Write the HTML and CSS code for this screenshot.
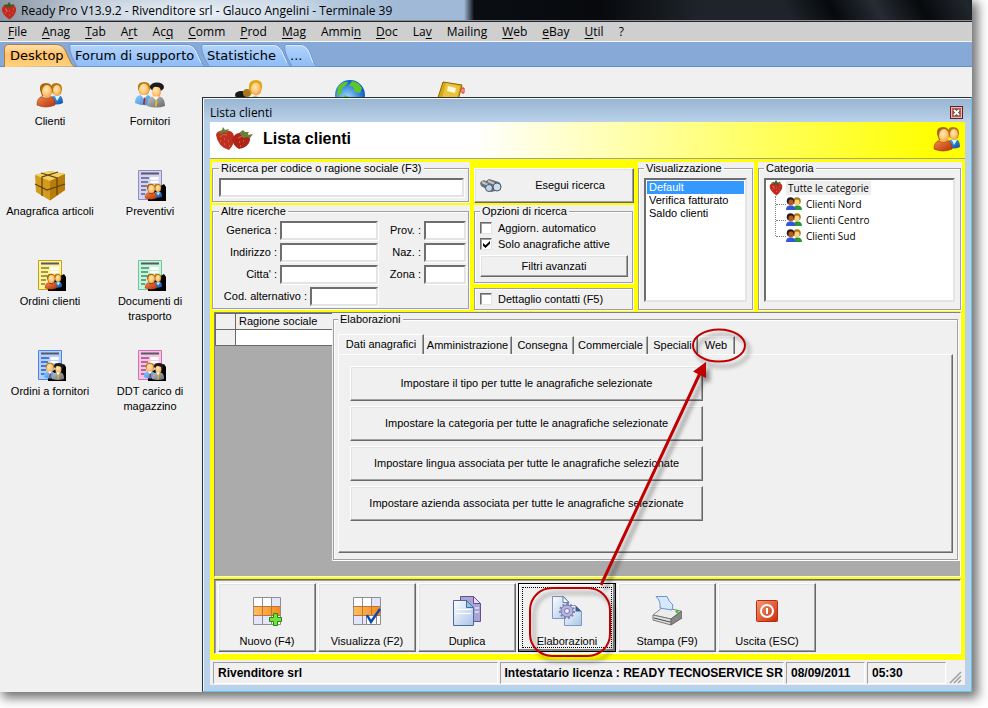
FILE: index.html
```
<!DOCTYPE html>
<html lang="it">
<head>
<meta charset="utf-8">
<title>Ready Pro V13.9.2</title>
<link rel="stylesheet" href="styles.css">
</head>
<body>
<svg class="defs" aria-hidden="true">
  <defs>
    <radialGradient id="g-face" cx=".4" cy=".35" r=".75"><stop offset="0" stop-color="#ffe9b8"/><stop offset=".5" stop-color="#ffc878"/><stop offset="1" stop-color="#ee9038"/></radialGradient>
    <linearGradient id="g-red" x1="0" y1="0" x2="1" y2="1"><stop offset="0" stop-color="#f08a4a"/><stop offset="1" stop-color="#b83008"/></linearGradient>
    <linearGradient id="g-blue" x1="0" y1="0" x2="1" y2="1"><stop offset="0" stop-color="#5fb2f5"/><stop offset="1" stop-color="#0a4aa8"/></linearGradient>
    <linearGradient id="g-sky" x1="0" y1="0" x2="1" y2="1"><stop offset="0" stop-color="#8fd0fb"/><stop offset="1" stop-color="#2a86dc"/></linearGradient>
    <linearGradient id="g-grey" x1="0" y1="0" x2="1" y2="1"><stop offset="0" stop-color="#c4c4c4"/><stop offset="1" stop-color="#666"/></linearGradient>
    <linearGradient id="g-orange" x1="0" y1="0" x2="1" y2="0"><stop offset="0" stop-color="#ffc060"/><stop offset="1" stop-color="#f88a1c"/></linearGradient>
    <linearGradient id="g-tab-on" x1="0" y1="0" x2="0" y2="1"><stop offset="0" stop-color="#ffe3b4"/><stop offset=".45" stop-color="#ffc168"/><stop offset="1" stop-color="#ffd27c"/></linearGradient>
    <linearGradient id="g-tab" x1="0" y1="0" x2="0" y2="1"><stop offset="0" stop-color="#b4d4fb"/><stop offset="1" stop-color="#8cbcf8"/></linearGradient>
    <linearGradient id="g-paper" x1="0" y1="0" x2="1" y2="1"><stop offset="0" stop-color="#fff"/><stop offset="1" stop-color="#a9c4e8"/></linearGradient>
    <radialGradient id="g-globe" cx=".4" cy=".6" r=".6"><stop offset="0" stop-color="#9fe0ff"/><stop offset="1" stop-color="#0a5ccc"/></radialGradient>
    <linearGradient id="g-power" x1="0" y1="0" x2="1" y2="1"><stop offset="0" stop-color="#f59a78"/><stop offset="1" stop-color="#cc2a06"/></linearGradient>
    <symbol id="clienti" viewBox="0 0 28 26">
      <path d="M15 8Q14 1 20 1 26 1 26 7L25 12H17Z" fill="#b07a10"/><ellipse cx="21" cy="8.500" rx="4" ry="5.500" fill="url(#g-face)"/>
      <path d="M13 21Q13 15 18 13.500L21 16 24 13.500Q27 15 27 21 20 24 13 21Z" fill="url(#g-blue)"/><path d="M19 14l2 5 3-5z" fill="#cff"/>
      <path d="M4 8Q3 1 10 1 17 1 16 9L14 14H6Z" fill="#a86a10"/><ellipse cx="11" cy="9.500" rx="5" ry="6.500" fill="url(#g-face)"/>
      <path d="M1 23Q1 16 6 14.500 11 18.500 15 14.500 19 16 19 23 10 27 1 23Z" fill="url(#g-red)" stroke="#9c2c08" stroke-width=".6"/>
    </symbol>
    <symbol id="fornitori" viewBox="0 0 32 28">
      <path d="M4 8Q3 1 10 1 17 1 16 8L14 13H6Z" fill="#b07a10"/><ellipse cx="10" cy="9" rx="5" ry="6.500" fill="url(#g-face)"/>
      <path d="M1 22Q1 15 6 14L10 16 14 14Q18 15 18 23 10 26 1 22Z" fill="url(#g-sky)"/><path d="M7 14l3 4 3-4z" fill="#fff"/><path d="M10 16l1.500 2-1 6-1.500-1z" fill="#d01818"/>
      <ellipse cx="23" cy="6" rx="7" ry="4.500" fill="#1c1c1c"/><ellipse cx="22.500" cy="11" rx="4.500" ry="6" fill="url(#g-face)"/>
      <path d="M16 7Q22 4 29 8L29 5Q22 0 16 5Z" fill="#1c1c1c"/>
      <path d="M13 25Q13 17 18 15.500L22 18 26 15.500Q31 17 31 25 22 28 13 25Z" fill="url(#g-grey)"/><path d="M19 15.500l3 4 3-4z" fill="#fff"/><path d="M22 18l1.500 2-1 6-1.500-1z" fill="#e8c020"/>
    </symbol>
    <symbol id="foglio" viewBox="0 0 24 30">
      <path d="M.5.500h23v29H.5z" fill="var(--paper)" stroke="var(--edge)"/>
      <path d="M3 3.500h18" stroke="#555a66" stroke-width="2"/><path d="M3 8h8M3 12h7M3 16h6M3 20h5M3 24h4" stroke="var(--ink)" stroke-width="1.500"/><path d="M12.500 7h8v3h-8zM12.500 11h8v2h-8z" fill="#fff"/>
    </symbol>
    <symbol id="fragola" viewBox="0 0 16 18">
      <path d="M1 6Q2 3 8 4 14 3 15 6 16 12 8.500 17.500 0 12 1 6Z" fill="#c02a20"/><path d="M4 7Q6 6 6 10" stroke="#e8705c" fill="none"/>
      <path d="M2 4l3-2 1 1 2-3 2 3 2-1 2 2-3 0-1 2-2-2-2 2-1-2z" fill="#3c5c1c"/>
      <path d="M4 11h1M8 9h1M11 11h1M8 13h1M12 7h1" stroke="#e07060"/>
    </symbol>
    <symbol id="gruppo" viewBox="0 0 16 14">
      <circle cx="11" cy="4" r="3.800" fill="#a87a18"/><ellipse cx="11" cy="5.500" rx="2.500" ry="3" fill="#ffd080"/><path d="M7 13Q8 8 11 8.500 16 8 16 13Z" fill="#289838"/>
      <circle cx="4.500" cy="4" r="3.800" fill="#202020"/><ellipse cx="5" cy="5.500" rx="2.500" ry="3" fill="#c4581c"/><path d="M0 13Q0 8 4.500 8.500 9 8 9.500 13Z" fill="#3058d8"/>
    </symbol>
    <symbol id="tabella" viewBox="0 0 30 30">
      <path d="M1 1h27v27H1z" fill="#fff"/><path d="M19 1h9v9h-9zM1 19h18v9H1z" fill="#e4e4fb"/><path d="M1 10h27v9H1z" fill="url(#g-orange)"/>
      <path d="M1.500 1.500h27v27h-27zM10.500 1v27M19.500 1v27M1 10.500h27M1 19.500h27" fill="none" stroke="#8e8e96"/><path d="M10.500 10v9M19.500 10v9M1 10.500h27M1 19.500h27" stroke="#b8763a"/>
    </symbol>
  </defs>
</svg>

<div class="app">
  <header class="titlebar"><svg class="logo"><use href="#fragola"/></svg><h1>Ready Pro V13.9.2 - Rivenditore srl - Glauco Angelini - Terminale 39</h1></header>

  <nav class="menu" aria-label="Menu">
    <button><u>F</u>ile</button><button><u>A</u>nag</button><button><u>T</u>ab</button><button>A<u>r</u>t</button><button>Ac<u>q</u></button><button><u>C</u>omm</button><button><u>P</u>rod</button><button><u>M</u>ag</button><button>Ammi<u>n</u></button><button><u>D</u>oc</button><button>La<u>v</u></button><button>Mailin<u>g</u></button><button><u>W</u>eb</button><button><u>e</u>Bay</button><button><u>U</u>til</button><button>?</button>
  </nav>

  <nav class="pages" aria-label="Pagine">
    <button class="page page-desktop"><svg viewBox="0 0 71 24"><path d="M.5 24V6Q.5 1.500 5 1.500H52Q58 1.500 61 7L67 20Q69 23.500 71 23.500" fill="url(#g-tab-on)" stroke="#b8793a"/></svg><span>Desktop</span></button>
    <button class="page page-forum"><svg viewBox="0 0 137 24"><path d="M.5 1.500H119Q124 1.500 127 7L133 20Q135 23.500 137 23.500H8L3 14Q.5 8 .5 1.500Z" fill="url(#g-tab)" stroke="#6a97d4"/><path d="M2 2.500H119Q123 2.500 126 7L132 20" fill="none" stroke="#dcebff"/></svg><span>Forum di supporto</span></button>
    <button class="page page-stat"><svg viewBox="0 0 91 24"><path d="M.5 3Q1 1.500 3 1.500H73Q78 1.500 81 7L87 20Q89 23.500 91 23.500H8L3 14Q.5 8 .5 3Z" fill="url(#g-tab)" stroke="#6a97d4"/><path d="M2 2.500H73Q77 2.500 80 7L86 20" fill="none" stroke="#dcebff"/></svg><span>Statistiche</span></button>
    <button class="page page-more"><svg viewBox="0 0 34 24"><path d="M.5 3Q1 1.500 3 1.500H17Q22 1.500 25 7L30 20Q32 23.500 34 23.500H8L3 14Q.5 8 .5 3Z" fill="url(#g-tab)" stroke="#6a97d4"/><path d="M2 2.500H17Q21 2.500 24 7L29 20" fill="none" stroke="#dcebff"/></svg><span>...</span></button>
  </nav>

  <main class="desktop">
    <div class="shortcuts">
      <div class="shortcut-row">
        <a class="shortcut" href="#clienti"><svg viewBox="0 0 32 32"><use href="#clienti" x="2" y="2" width="28" height="26"/></svg>Clienti</a>
        <a class="shortcut" href="#fornitori"><svg viewBox="0 0 32 32"><use href="#fornitori" x="0" y="1" width="32" height="28"/></svg>Fornitori</a>
        <span class="shortcut"><svg viewBox="0 0 32 32"><ellipse cx="7" cy="15" rx="6" ry="4" fill="#181818"/><circle cx="13" cy="13" r="4" fill="#a8741c"/><path d="M15 9Q14 0 22 0 29 0 28 8L26 14H17Z" fill="#e0a810"/><ellipse cx="22" cy="9" rx="5" ry="6.500" fill="url(#g-face)"/><path d="M14 20Q18 14 29 18V24H14Z" fill="#38a838"/></svg></span>
        <span class="shortcut"><svg viewBox="0 0 32 32"><circle cx="16" cy="15" r="15" fill="url(#g-globe)"/><path d="M4 7Q9 1 14 2L11 6 8 8 8 13 3 16ZM18 1Q25 2 28 8L26 13 21 12 19 7 15 6ZM10 15l6 2-2 8-6-4z" fill="#5cc828"/></svg></span>
        <span class="shortcut"><svg viewBox="0 0 32 32"><path d="M9 2L28 5 22 28 2 24Z" fill="#d8a818" stroke="#8c6400"/><path d="M12 3L26 6 21 25 7 22Z" fill="#e8c440"/><path d="M14 6l8 2-1 5-8-2z" fill="#fff8d8"/><path d="M28 8h2v5h-2z" fill="none" stroke="#e82010"/></svg></span>
      </div>
      <div class="shortcut-row">
        <a class="shortcut broad" href="#articoli"><svg viewBox="0 0 32 32"><path d="M16 1L31 4V20L16 30.500 2 22 1 5Z" fill="#d49c1c"/><path d="M1 5L16 1 31 4 16 11Z" fill="#f4cf62"/><path d="M16 11L31 4V20L16 30.500Z" fill="#b87c0c"/><path d="M1 14l12 6 18-6M7 3l16 5V25M24 2L8 7V26" fill="none" stroke="#5c4210" stroke-width="1.200"/></svg>Anagrafica articoli</a>
        <a class="shortcut paper-violet" href="#preventivi"><svg viewBox="0 0 32 32"><use href="#foglio" x="4" y="0" width="24" height="30"/><path d="M14 31V24l16-10 2 3V31z"/><use href="#clienti" x="9" y="13" width="21" height="17"/></svg>Preventivi</a>
      </div>
      <div class="shortcut-row">
        <a class="shortcut paper-yellow" href="#ordini-clienti"><svg viewBox="0 0 32 32"><use href="#foglio" x="4" y="0" width="24" height="30"/><path d="M14 31V24l16-10 2 3V31z"/><use href="#clienti" x="9" y="13" width="21" height="17"/></svg>Ordini clienti</a>
        <a class="shortcut paper-green" href="#ddt"><svg viewBox="0 0 32 32"><use href="#foglio" x="4" y="0" width="24" height="30"/><path d="M14 31V24l16-10 2 3V31z"/><use href="#clienti" x="9" y="13" width="21" height="17"/></svg>Documenti di trasporto</a>
      </div>
      <div class="shortcut-row">
        <a class="shortcut broad paper-blue" href="#ordini-fornitori"><svg viewBox="0 0 32 32"><use href="#foglio" x="4" y="0" width="24" height="30"/><path d="M14 31V24l16-10 2 3V31z"/><use href="#fornitori" x="9" y="12" width="22" height="19"/></svg>Ordini a fornitori</a>
        <a class="shortcut paper-pink" href="#ddt-carico"><svg viewBox="0 0 32 32"><use href="#foglio" x="4" y="0" width="24" height="30"/><path d="M14 31V24l16-10 2 3V31z"/><use href="#fornitori" x="9" y="12" width="22" height="19"/></svg>DDT carico di magazzino</a>
      </div>
    </div>

    <section class="window" aria-label="Lista clienti">
      <div class="window-title"><span>Lista clienti</span><button class="close" aria-label="Chiudi"><svg viewBox="0 0 11 11"><path d="M3 3l5 5M8 3l-5 5" stroke="#444" stroke-width="3.500"/><path d="M3 3l5 5M8 3l-5 5" stroke="#fff" stroke-width="2"/></svg></button></div>
      <div class="window-body">
        <div class="banner">
          <svg class="berries" viewBox="0 0 38 24"><path d="M1 8Q2 3 10 4 18 3 19 9 20 17 14 23 3 20 1 8Z" fill="#c03020"/><path d="M19 9Q22 5 29 6 36 7 35 13 34 20 24 22 18 19 17 12Z" fill="#b02418"/><path d="M5 10Q8 6 12 8M23 11q4-3 7-1" stroke="#d86850" fill="none"/><path d="M3 5l4-2 1-3 2 3 4-1-2 4-3-1-3 2zM24 6l4-3 2 2 4 0-2 3 6-1-3 4-3-1-3 1z" fill="#66803c"/><path d="M5 14h1M9 12h1M13 14h1M9 17h1M14 19h1M24 15h1M28 14h1M25 19h1" stroke="#e08070"/></svg>
          <h2>Lista clienti</h2>
          <svg class="banner-icon"><use href="#clienti"/></svg>
        </div>

        <div class="content">
          <div class="filters">
            <div class="stack">
              <div class="panel"><fieldset class="wide"><legend>Ricerca per codice o ragione sociale (F3)</legend><input type="text" class="field" aria-label="Ricerca per codice o ragione sociale"></fieldset></div>
              <div class="panel"><fieldset class="others"><legend>Altre ricerche</legend>
                <div class="pair"><label for="gen">Generica :</label><input id="gen" type="text" class="field medium"><label for="prov">Prov. :</label><input id="prov" type="text" class="field short"></div>
                <div class="pair"><label for="ind">Indirizzo :</label><input id="ind" type="text" class="field medium"><label for="naz">Naz. :</label><input id="naz" type="text" class="field short"></div>
                <div class="pair"><label for="cit">Citta' :</label><input id="cit" type="text" class="field medium"><label for="zona">Zona :</label><input id="zona" type="text" class="field short"></div>
                <div class="pair alt"><label for="alt">Cod. alternativo :</label><input id="alt" type="text" class="field"></div>
              </fieldset></div>
            </div>

            <div class="stack">
              <button class="raised search"><svg viewBox="0 0 24 16"><path d="M1 5Q3 1 7 3L10 1 20 4Q24 7 21 12L12 14 2 8Z" fill="#6c7074"/><path d="M3 4L13 9M9 3l9 4" stroke="#c4c8cc" stroke-width="2"/><circle cx="10" cy="10" r="3.500" fill="#b8d8f4" stroke="#555"/><circle cx="18" cy="9" r="4" fill="#c4e0f8" stroke="#555"/></svg><span>Esegui ricerca</span></button>
              <div class="panel"><fieldset class="options"><legend>Opzioni di ricerca</legend>
                <label class="check"><input type="checkbox">Aggiorn. automatico</label>
                <label class="check"><input type="checkbox" checked>Solo anagrafiche attive</label>
                <button class="raised advanced">Filtri avanzati</button>
              </fieldset></div>
              <div class="panel last"><div class="frame"><label class="check"><input type="checkbox">Dettaglio contatti (F5)</label></div></div>
            </div>

            <div class="panel"><fieldset class="views"><legend>Visualizzazione</legend>
              <select size="8" aria-label="Visualizzazione"><option selected>Default</option><option>Verifica fatturato</option><option>Saldo clienti</option></select>
            </fieldset></div>

            <div class="panel"><fieldset class="category"><legend>Categoria</legend>
              <div class="tree" role="tree">
                <div class="node root" role="treeitem"><svg><use href="#fragola"/></svg><span>Tutte le categorie</span></div>
                <div class="branch">
                  <div class="node" role="treeitem"><svg><use href="#gruppo"/></svg><span>Clienti Nord</span></div>
                  <div class="node" role="treeitem"><svg><use href="#gruppo"/></svg><span>Clienti Centro</span></div>
                  <div class="node" role="treeitem"><svg><use href="#gruppo"/></svg><span>Clienti Sud</span></div>
                </div>
              </div>
            </fieldset></div>
          </div>

          <div class="work">
            <table class="list"><thead><tr><th class="mark"></th><th>Ragione sociale</th></tr></thead><tbody><tr><td class="mark"></td><td></td></tr></tbody></table>
            <div class="jobs"><fieldset><legend>Elaborazioni</legend>
              <div class="tabs" role="tablist">
                <button class="tab active" role="tab" aria-selected="true">Dati anagrafici</button><button class="tab" role="tab">Amministrazione</button><button class="tab" role="tab">Consegna</button><button class="tab" role="tab">Commerciale</button><button class="tab" role="tab">Speciali</button><button class="tab" role="tab">Web</button>
              </div>
              <div class="tab-body" role="tabpanel">
                <button class="raised job">Impostare il tipo per tutte le anagrafiche selezionate</button>
                <button class="raised job">Impostare la categoria per tutte le anagrafiche selezionate</button>
                <button class="raised job">Impostare lingua associata per tutte le anagrafiche selezionate</button>
                <button class="raised job">Impostare azienda associata per tutte le anagrafiche selezionate</button>
              </div>
            </fieldset></div>
          </div>

          <div class="toolbar">
            <button class="raised tool"><svg viewBox="0 0 30 30"><use href="#tabella" width="30" height="30"/><path d="M21.500 17.500h4v4h4v4h-4v4h-4v-4h-4v-4h4z" fill="#74e03c" stroke="#1c8c14"/></svg>Nuovo (F4)</button>
            <button class="raised tool"><svg viewBox="0 0 30 30"><use href="#tabella" width="30" height="30"/><path d="M14.500 19.500h10v9h-10z" fill="#fff" stroke="#888"/><path d="M15 19l4 7 9-13" fill="none" stroke="#0c48a8" stroke-width="2.500"/></svg>Visualizza (F2)</button>
            <button class="raised tool"><svg viewBox="0 0 30 30"><path d="M8.500.500h13l7 7v18h-20z" fill="#a8a4d4" stroke="#6a4c98"/><path d="M21.500.500v7h7z" fill="#e4e0fa" stroke="#6a4c98"/><path d="M23 12h4M23 16h4" stroke="#fff"/><path d="M1.500 4.500h13l7 7v18h-20z" fill="url(#g-paper)" stroke="#4c6a9c"/><path d="M14.500 4.500v7h7z" fill="#8cc4e8" stroke="#4c6a9c"/><path d="M4 13.500h15M4 17.500h15" stroke="#fff"/></svg>Duplica</button>
            <button class="raised tool focused"><svg viewBox="0 0 30 30"><path d="M.5.500h11l5 5v17H.5z" fill="url(#g-paper)" stroke="#7c98c4"/><path d="M11 .500v6h6z" fill="#fff" stroke="#5c7cac"/><path d="M12.500 9.500h11l6 6v14h-17z" fill="url(#g-paper)" stroke="#7c98c4"/><path d="M23.500 9.500v6h6z" fill="#3c5c94"/><circle cx="15" cy="15" r="6" fill="#b4b4dc" stroke="#7474ac"/><circle cx="15" cy="15" r="7" fill="none" stroke="#8080b8" stroke-width="2" stroke-dasharray="2 2"/><circle cx="15" cy="15" r="2.500" fill="#eef" stroke="#7474ac"/></svg>Elaborazioni</button>
            <button class="raised tool"><svg viewBox="0 0 30 30"><path d="M1 19L11 11 29 15 19 23Z" fill="#ececec" stroke="#888"/><path d="M1 19L19 23V29L1 24Z" fill="#e0e0e0" stroke="#777"/><path d="M19 23L30 15V22L19 29Z" fill="#888" stroke="#666"/><path d="M4 .500L15 .500Q17 6 21 9L20 14 8 12Q9 5 4 .500Z" fill="#d4e8ff" stroke="#6c94cc"/><path d="M2 22l16 4" stroke="#444"/><circle cx="25" cy="15.500" r="1.500" fill="#28c818"/></svg>Stampa (F9)</button>
            <button class="raised tool"><svg viewBox="0 0 30 30"><rect x="4.500" y="4.500" width="21" height="21" rx="1" fill="url(#g-power)" stroke="#b82c0c"/><circle cx="15" cy="15" r="6" fill="none" stroke="#fff" stroke-width="2"/><path d="M15 12v6" stroke="#fff" stroke-width="2"/></svg>Uscita (ESC)</button>
          </div>
        </div>

        <footer class="status">
          <span class="owner">Rivenditore srl</span><span class="licence">Intestatario licenza : READY TECNOSERVICE SRL</span><span class="when">08/09/2011</span><span class="when">05:30</span>
          <svg class="grip" viewBox="0 0 14 14"><path d="M2 13L13 2M6 13l7-7M10 13l3-3" stroke="#a0a0a0" stroke-width="1.500"/></svg>
        </footer>
      </div>
    </section>
  </main>

  <svg class="notes" viewBox="0 0 988 708" aria-hidden="true">
    <g fill="none" stroke="#c00000" stroke-width="2"><ellipse cx="719" cy="345.500" rx="26" ry="16"/><rect x="530" y="588" width="80" height="68" rx="22"/></g>
    <path d="M601 585L701 371" stroke="#c00000" stroke-width="3"/><path d="M706 362L693 371.500 706 378Z" fill="#c00000"/>
  </svg>
</div>
</body>
</html>
```
FILE: styles.css
```
* { box-sizing: border-box; }
body { margin: 0; background: #fff; font: 11px/13px "Liberation Sans", Arial, sans-serif; color: #000; }
button, input, select { font: inherit; color: inherit; margin: 0; padding: 0; border: 0; border-radius: 0; background: none; }
h1, h2 { margin: 0; font-weight: normal; }
a { color: inherit; text-decoration: none; }
.defs { position: absolute; width: 0; height: 0; }

.app { position: relative; display: flex; flex-direction: column; min-height: calc(100vh - 16px); margin: 0 16px 16px 0; background: #f0f0f0; box-shadow: 4px 4px 10px 2px rgba(0, 0, 0, .55); clip-path: inset(0 -16px -16px 0); }

.titlebar { display: flex; align-items: center; gap: 4px; height: 22px; padding-left: 1px; border-bottom: 1px solid #23262b; box-shadow: inset 0 -1px #8b9096; background: radial-gradient(ellipse 150px 22px at 190px 12px, rgba(240, 246, 252, .9), rgba(240, 246, 252, 0)), linear-gradient(62deg, transparent 700px, #07090c 740px, #262c33 780px, #07090c 820px, #20252b 860px), linear-gradient(90deg, #8b97a5 0, #b9c5d2 80px, #c4d3e2 280px, #9fb9d6 400px, #9fb9d6 464px, #0a0e13 474px, #07090c 600px, #1e242a 700px); }
.titlebar h1, .menu, .window-title { font: 12px/18px "Open Sans", "Noto Sans", sans-serif; }
.logo { width: 16px; height: 18px; }

.menu { display: flex; gap: 15px; height: 20px; padding-left: 8px; background: #cfcfcf; border-bottom: 1px solid #f4f4f4; }
.menu u { text-underline-offset: 2px; }

.pages { display: flex; height: 25px; padding: 1px 0 0 4px; background: #87a9d8; border-bottom: 1px solid #5b8fd0; }
.page { position: relative; height: 24px; text-align: left; font: 13px/26px "DejaVu Sans", Verdana, sans-serif; }
.page svg { position: absolute; inset: 0; width: 100%; height: 100%; }
.page span { position: relative; padding-left: 6px; white-space: nowrap; }
.page-desktop { z-index: 3; width: 71px; }
.page-forum { z-index: 2; width: 137px; margin-left: -6px; }
.page-stat { z-index: 1; width: 91px; margin-left: -5px; }
.page-more { width: 34px; margin-left: -8px; }

.desktop { display: grid; flex: 1; }
.shortcuts, .window { grid-area: 1 / 1; }
.shortcuts { display: flex; flex-direction: column; padding-top: 13px; }
.shortcut-row { display: flex; height: 90px; }
.shortcut { display: flex; flex-direction: column; align-items: center; gap: 2px; width: 100px; padding: 0 14px; line-height: 15px; text-align: center; }
.broad { padding: 0; }
.shortcut svg { width: 32px; height: 32px; flex: none; }
.paper-violet { --paper: #d4d4f0; --edge: #8c8cc0; --ink: #5c5c8c; }
.paper-yellow { --paper: #fbf3a0; --edge: #c8a010; --ink: #8c7c20; }
.paper-green { --paper: #c8f4dc; --edge: #6cc498; --ink: #3c8c64; }
.paper-blue { --paper: #b4d0ff; --edge: #4c84e8; --ink: #2858b8; }
.paper-pink { --paper: #f8c4e4; --edge: #d070b0; --ink: #a04880; }

.window { z-index: 1; display: flex; flex-direction: column; margin: 30px 0 0 202px; padding: 0 6px 6px 7px; background: #b9d1ea; border: 1px solid; border-color: #2b2f36 #5fc8ea #5fc8ea #2b2f36; box-shadow: inset 1px 1px #f4f8fc; }
.window-title { display: flex; justify-content: space-between; align-items: center; height: 23px; margin: 1px -6px 0 -6px; padding: 4px 8px 0 6px; background: linear-gradient(#9ab5d1, #b9d1ea); }
.close { width: 13px; height: 13px; border: 1px solid #5c2428; background: #c05c50; box-shadow: inset 0 0 0 1px #e8b8b0; }
.close svg { display: block; width: 11px; height: 11px; }
.window-body { display: flex; flex: 1; flex-direction: column; min-width: 0; }

.banner { display: flex; align-items: center; gap: 10px; height: 37px; padding: 0 4px 3px 5px; border-bottom: 1px solid #a0a0a0; background: linear-gradient(90deg, #fff 35%, #ff0 96%); }
.banner h2 { flex: 1; font: bold 16px/20px "Liberation Sans", Arial, sans-serif; }
.berries { width: 38px; height: 24px; }
.banner-icon { width: 28px; height: 26px; }

.content { display: flex; flex: 1; flex-direction: column; background: #ff0; }
.filters { display: grid; grid-template-columns: 258px 160px 116px 1fr; gap: 4px; padding: 3px 3px 0 2px; }
.stack { display: flex; flex-direction: column; gap: 2px; }
.panel { display: flex; background: #f0f0f0; padding-bottom: 1px; }
fieldset, .frame { flex: 1; min-width: 0; margin: 0 1px 0 0; padding: 0; border: 1px solid #a0a0a0; box-shadow: 1px 1px #fff, inset 1px 1px #fff; }
legend { padding: 0 2px; background: #f0f0f0; }
.others legend { margin-left: 4px; }
.field { height: 19px; background: #fff; border: 2px solid; border-color: #6e6e6e #e4e4e4 #e4e4e4 #6e6e6e; box-shadow: 1px 1px #fff; padding: 0 2px; }
.wide { padding: 3px 4px 4px 6px; }
.wide .field { display: block; width: 100%; }
.others { padding: 3px 2px 2px; }
.pair { display: grid; grid-template-columns: 62px 98px 40px 42px; gap: 3px; align-items: center; margin-bottom: 3px; text-align: right; }
.pair:last-child { margin: 0; }
.alt { grid-template-columns: 92px 68px; }
.field.medium, .field.short, .alt .field { width: 100%; }

.raised { background: #f0f0f0; border: 1px solid; border-color: #fff #696969 #696969 #fff; box-shadow: inset -1px -1px #a0a0a0, inset 1px 1px #e3e3e3; text-align: center; }
.search { display: flex; align-items: center; height: 35px; margin-top: 6px; padding: 0 4px; }
.search svg { width: 24px; height: 16px; }
.search span { flex: 1; padding-left: 8px; }
.options { padding: 2px 4px 5px 5px; }
.check { display: flex; align-items: center; gap: 6px; height: 16px; white-space: nowrap; }
.check input { appearance: none; width: 12px; height: 12px; background: #fff; border: 1px solid; border-color: #696969 #e3e3e3 #e3e3e3 #696969; box-shadow: inset 1px 1px #a0a0a0; }
.check input:checked::before { content: ""; display: block; width: 7px; height: 7px; margin: 2px; background: #000; clip-path: polygon(0 30%, 35% 60%, 100% 0, 100% 38%, 35% 100%, 0 68%); }
.advanced { display: block; width: 148px; height: 22px; margin-top: 3px; }
.last { margin-top: 2px; flex: 1; }
.frame { padding: 2px 5px; }
.views, .category { padding: 3px 5px 5px; }
.views select { display: block; width: 100%; height: 124px; padding: 1px; overflow: hidden; background: #fff; border: 2px solid; border-color: #6e6e6e #e4e4e4 #e4e4e4 #6e6e6e; }
.views option { min-height: 13px; height: 13px; padding: 0 2px; line-height: 13px; }
.views option:checked { background: #39f linear-gradient(#39f, #39f); color: #fff; }
.tree { height: 124px; padding: 0 2px; background: #fff; border: 2px solid; border-color: #6e6e6e #e4e4e4 #e4e4e4 #6e6e6e; font: 10px/14px "Open Sans", "Noto Sans", sans-serif; }
.node { display: flex; align-items: center; gap: 2px; height: 16px; }
.node svg { width: 16px; height: 14px; }
.node span { padding: 0 2px; }
.root span { background: #eee; }
.root svg { width: 16px; height: 16px; }
.branch { margin-left: 7px; border-left: 1px dotted #808080; height: 40px; }
.branch .node::before { content: ""; width: 10px; margin-right: -2px; border-top: 1px dotted #808080; }

.work { display: flex; flex: 1; align-items: flex-start; margin: 1px 4px 0; padding-bottom: 15px; background: #ababab; border: solid; border-width: 1px; border-color: #808080 #fff #fff #808080; }
.list { width: 117px; border-collapse: collapse; }
.list th, .list td { height: 16px; padding: 0 3px; border: solid #696969; border-width: 1px 0 1px 1px; font-weight: normal; text-align: left; white-space: nowrap; }
.list td { background: #fff; }
.list th, .list .mark { background: #f0f0f0; }
.list .mark { width: 20px; }
.jobs { display: flex; flex: 1; align-self: stretch; min-width: 0; padding: 0 1px 1px; background: #f0f0f0; }
.jobs fieldset { display: flex; flex-direction: column; padding: 8px 4px 6px; }
.tabs { display: grid; grid-template-columns: 86px 88px 62px 74px 50px 37px; align-items: end; height: 20px; }
.tab { height: 18px; border: solid; border-width: 1px 1px 0 0; border-color: #fff #696969; box-shadow: inset -1px 0 #a0a0a0; text-align: center; white-space: nowrap; }
.tab.active { height: 20px; border-left: 1px solid #fff; }
.tab-body { display: flex; flex: 1; flex-direction: column; gap: 5px; padding: 11px; border: 1px solid; border-color: #fff #696969 #696969 #fff; box-shadow: inset -1px -1px #a0a0a0; }
.job { width: 353px; max-width: 100%; height: 35px; }

.toolbar { display: flex; gap: 2px; margin: 2px 4px 6px; padding: 3px 2px 1px 3px; background: #f0f0f0; border: 1px solid; border-color: #696969 #fff #fff #808080; box-shadow: inset 1px 1px #a0a0a0; }
.tool { display: flex; flex-direction: column; align-items: center; justify-content: flex-end; gap: 9px; width: 98px; height: 69px; padding-bottom: 3px; white-space: nowrap; }
.tool svg { width: 30px; height: 30px; }
.focused { position: relative; border-color: #000; box-shadow: inset -2px -2px #808080, inset 1px 1px #fff; }
.focused::after { content: ""; position: absolute; inset: 3px; border: 1px dotted #000; }

.status { display: flex; gap: 2px; height: 25px; padding: 2px 3px 1px; background: #f0f0f0; font-size: 12px; font-weight: bold; line-height: 21px; }
.status span { overflow: hidden; padding: 0 4px; border: 1px solid; border-color: #a0a0a0 #fff #fff #a0a0a0; white-space: nowrap; }
.owner, .licence { flex: 1 1 0; }
.when { width: 79px; }
.grip { width: 14px; height: 14px; align-self: flex-end; }

.notes { position: absolute; z-index: 5; top: 0; left: 0; width: 988px; height: 708px; pointer-events: none; overflow: visible; filter: drop-shadow(4px 5px 2px rgba(0, 0, 0, .4)); }
```
